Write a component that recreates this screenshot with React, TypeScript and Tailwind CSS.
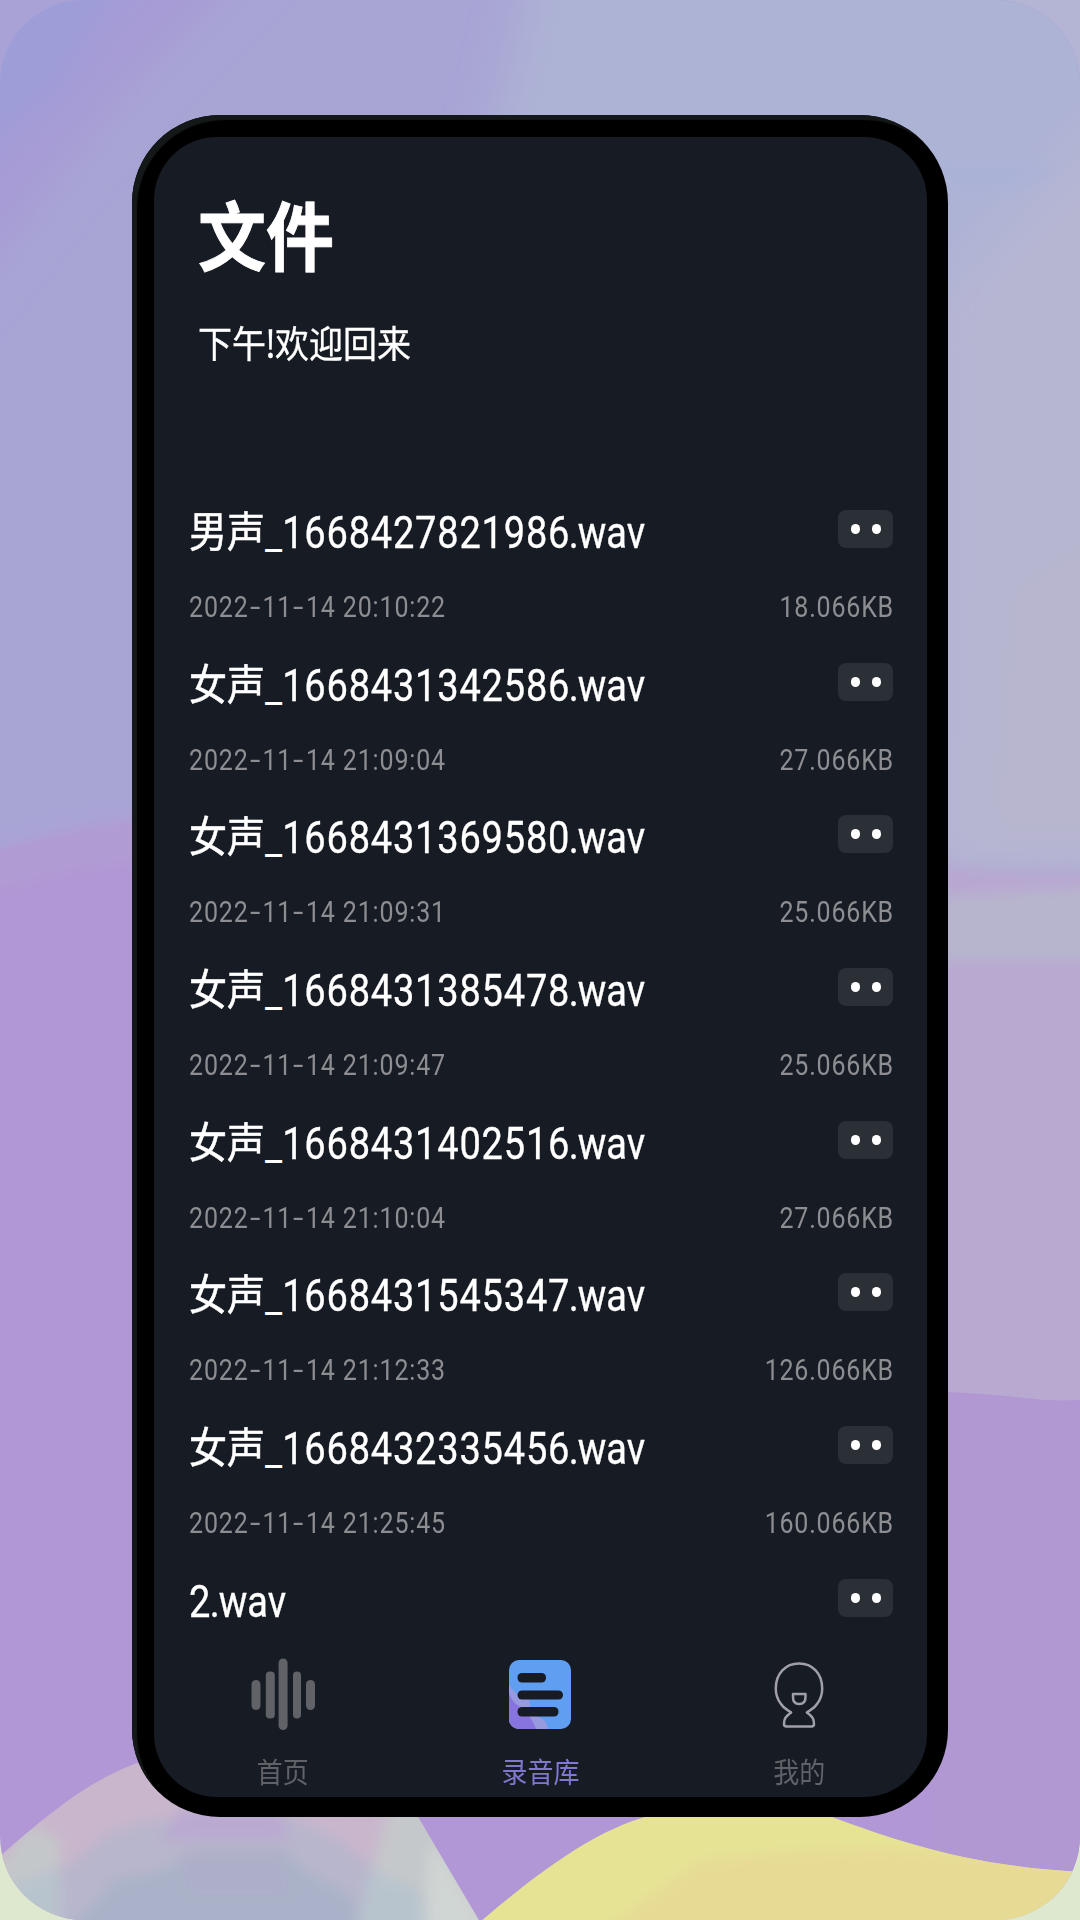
import type { ReactNode } from "react";

type FileRow = {
  voice: string | null;
  id: string;
  date: string | null;
  size: string | null;
};

const files: FileRow[] = [
  { voice: "男声", id: "1668427821986", date: "2022-11-14 20:10:22", size: "18.066KB" },
  { voice: "女声", id: "1668431342586", date: "2022-11-14 21:09:04", size: "27.066KB" },
  { voice: "女声", id: "1668431369580", date: "2022-11-14 21:09:31", size: "25.066KB" },
  { voice: "女声", id: "1668431385478", date: "2022-11-14 21:09:47", size: "25.066KB" },
  { voice: "女声", id: "1668431402516", date: "2022-11-14 21:10:04", size: "27.066KB" },
  { voice: "女声", id: "1668431545347", date: "2022-11-14 21:12:33", size: "126.066KB" },
  { voice: "女声", id: "1668432335456", date: "2022-11-14 21:25:45", size: "160.066KB" },
  { voice: null, id: "2", date: null, size: null },
];

export default function App() {
  return (
    <div className="relative w-[1080px] h-[1920px] overflow-hidden bg-[#dde8cf] flex justify-center items-start pt-[115px] font-[Roboto,'Noto_Sans_CJK_SC',sans-serif]">
      <Wallpaper />
      <div className="relative w-[816px] h-[1702px] rounded-[88px] bg-black shadow-[inset_5px_5px_1px_#151818] pt-[22px] pl-[22px] pr-[21px] pb-[20px]">
        <div className="h-full rounded-[63px] bg-[#171b23] overflow-hidden flex flex-col">
          <header className="pl-11 pt-[63px] text-white">
            <h1 className="h-20 text-[68px] leading-[80px] font-bold scale-y-[1.1] [-webkit-text-stroke:0.8px_white]">文件</h1>
            <p className="mt-[43px] h-10 text-[34px] leading-10 scale-y-[1.1] font-['Noto_Sans_CJK_SC',sans-serif] [-webkit-text-stroke:0.3px_white]">
              下午<span className="-ml-px -mr-px">!</span>欢迎回来
            </p>
          </header>

          <ul className="mt-[143px] pl-[35px] pr-[34px] h-[1143px] overflow-hidden">
            {files.map((f) => (
              <FileItem key={f.id} file={f} />
            ))}
          </ul>

          <nav className="flex-1 grid grid-cols-3">
            <Tab label="首页" className="text-[#606267]">
              <WaveIcon />
            </Tab>
            <Tab label="录音库" className="text-[#8078cf]">
              <LibraryIcon />
            </Tab>
            <Tab label="我的" className="text-[#606267] pl-0.5">
              <ProfileIcon />
            </Tab>
          </nav>
        </div>
      </div>
    </div>
  );
}

function FileItem({ file }: { file: FileRow }) {
  return (
    <li className="h-[152.7px]">
      <div className="flex justify-between items-start h-[54px]">
        <div className="flex text-[38px] leading-[54px] text-white whitespace-nowrap">
          {file.voice && (
            <>
              <span className="scale-y-[1.11] [-webkit-text-stroke:0.5px_white]">{file.voice}</span>
              <span className="translate-y-[3px]">_</span>
            </>
          )}
          <span className="scale-y-[1.18] tracking-[0.8px] [-webkit-text-stroke:0.3px_white]">{file.id}</span>
          <span className="scale-y-[1.18] -ml-[1.5px] [-webkit-text-stroke:0.3px_white]">
            .<span className="-ml-px">wav</span>
          </span>
        </div>
        <button className="mt-1 w-[55px] h-[38px] rounded-lg bg-[#2b2f36] flex items-center justify-center gap-3">
          <span className="w-[9px] h-[10px] rounded-full bg-white" />
          <span className="w-[9px] h-[10px] rounded-full bg-white" />
        </button>
      </div>
      {file.date && (
        <div className="mt-[31px] flex justify-between text-[25px] leading-8 text-[#8d8e92] whitespace-nowrap">
          <span className="scale-y-[1.2] tracking-[0.85px]">
            {file.date.split("-").map((part, i) => (
              <span key={i}>
                {i > 0 && <span className="inline-block mx-[3px] scale-x-[1.5]">-</span>}
                {part}
              </span>
            ))}
          </span>
          <span className="scale-y-[1.2] tracking-[0.8px] -mr-px">{file.size}</span>
        </div>
      )}
    </li>
  );
}

function Tab({ label, className, children }: { label: string; className: string; children: ReactNode }) {
  return (
    <div className={`flex flex-col items-center pt-[6.5px] ${className}`}>
      {children}
      <span className="mt-[23px] text-[26px] leading-9 scale-y-[1.1]">{label}</span>
    </div>
  );
}

function WaveIcon() {
  return (
    <svg width="66" height="76" viewBox="0 0 66 76" fill="currentColor">
      <rect x="1.5" y="24" width="9" height="30" rx="4.5" />
      <rect x="15.8" y="15.5" width="9" height="47" rx="4" />
      <rect x="28.6" y="2.5" width="9" height="71.5" rx="4.5" />
      <rect x="43" y="15.5" width="8" height="47" rx="4" />
      <rect x="56" y="24" width="9" height="30" rx="4.5" />
    </svg>
  );
}

function LibraryIcon() {
  return (
    <svg width="66" height="76" viewBox="0 0 66 76">
      <defs>
        <clipPath id="card">
          <rect x="2" y="4" width="62" height="69" rx="10" />
        </clipPath>
      </defs>
      <g clipPath="url(#card)">
        <rect width="66" height="76" fill="#609ef1" />
        <path d="M0 24C4 33 8 37 13 40L22 43C23 50 24 55 28 59C32 62 37 62 39 67L42 76H0Z" fill="#979adf" />
        <path d="M0 34C4 42 7 47 11 49.500C16 52 19 53 21 58C24 63 28 68 30 76H0Z" fill="#8874df" />
      </g>
      <g fill="#171b23">
        <rect x="10.5" y="17" width="28.5" height="9.5" rx="4.5" />
        <rect x="10.5" y="34.5" width="45.5" height="9" rx="4.5" />
        <rect x="10.5" y="51" width="41" height="9.5" rx="4.5" />
      </g>
    </svg>
  );
}

function ProfileIcon() {
  return (
    <svg width="66" height="76" viewBox="0 0 66 76" fill="none" stroke="#a09fa7" strokeWidth="2.5" strokeLinejoin="round" strokeLinecap="round">
      <path d="M25 56.500C19 61 18 63 18 68Q18 70.500 20.500 70.500H45.500Q48 70.500 48 68C48 63 47 61 41 56.500" />
      <path d="M25 56.500C22 54 18 53 15 48C11 43 9.800 39 9.800 32.500C9.800 17.500 19.500 7.500 33 7.500C46.500 7.500 56.200 17.500 56.200 32.500C56.200 39 55 43 51 48C48 53 44 54 41 56.500" />
      <path d="M27 38H39.500V41C39.500 46 37 48 33.200 48C29.500 48 27 46 27 41Z" />
    </svg>
  );
}

function Wallpaper() {
  return (
    <div className="absolute inset-0 bg-[linear-gradient(to_bottom,transparent_50%,#dde8cf_50%),linear-gradient(to_right,#a8a2d6_50%,#b4b4d4_50%)]">
      <div className="h-full rounded-[84px] overflow-hidden bg-[#b197d5]">
        <svg width="1080" height="1920" viewBox="0 0 1080 1920">
          <defs>
            <filter id="soft" x="-30%" y="-30%" width="160%" height="160%">
              <feGaussianBlur stdDeviation="22" />
            </filter>
            <filter id="edge" x="-20%" y="-20%" width="140%" height="140%">
              <feGaussianBlur stdDeviation="7" />
            </filter>
            <clipPath id="hill">
              <path d="M-2 1858C50 1812 90 1780 137 1763C240 1715 370 1740 418 1817L480 1922H-2Z" />
            </clipPath>
            <clipPath id="dune">
              <path d="M480 1922C550 1862 600 1830 645 1817C710 1800 780 1803 832 1817C900 1842 970 1866 1080 1872V1922Z" />
            </clipPath>
          </defs>

          <path d="M0 0H1080V880C900 900 700 860 500 840C300 800 120 820 0 850Z" fill="#a8a5d5" />
          <g filter="url(#soft)">
            <path d="M-60 -60H280L120 100L-60 330Z" fill="#a79bd5" />
            <path d="M-60 -60H150L60 90L-60 190Z" fill="#9d9dd8" />
            <path d="M540 -60H1140V300H420L500 110Z" fill="#adb3d5" />
            <path d="M1140 80L1000 230L920 320V880H1140Z" fill="#b6b6d3" />
            <path d="M1000 580L1140 500V840H980Z" fill="#b8b6ce" />
          </g>
          <path d="M930 880H1080V1400C1040 1402 990 1396 930 1392Z" fill="#b8a9d0" />
          <g filter="url(#edge)">
            <path d="M900 900L1100 886V960H900Z" fill="#b7b5ce" />
            <path d="M-20 855C50 830 100 818 160 814V862C90 862 50 878 -20 892Z" fill="#b09cd3" />
            <path d="M920 862C980 872 1020 872 1100 874V888C1020 888 980 894 920 896Z" fill="#b8a7d1" />
            <path d="M930 160L1060 168L1020 190H940Z" fill="#abb2d7" />
          </g>
          <path d="M930 1392C1000 1392 1040 1402 1080 1402V1900H930Z" fill="#b198d3" />

          <g clipPath="url(#hill)">
            <rect y="1700" width="500" height="220" fill="#c9b6cc" />
            <g filter="url(#edge)">
              <path d="M-20 1890L30 1825L60 1840L60 1900H-20Z" fill="#c4c7ca" />
              <path d="M392 1800H430L500 1940H350L372 1870Z" fill="#c5c8cb" />
              <path d="M430 1840L500 1940H425Z" fill="#d0d6d4" />
              <path d="M-20 1895L70 1865L105 1835L150 1820L290 1815L340 1840L375 1870V1940H-20Z" fill="#b8b6cc" />
              <path d="M180 1810H280L290 1840H160Z" fill="#b9a9d1" />
              <path d="M-20 1890L60 1872V1940H-20Z" fill="#b8c4cd" />
              <path d="M370 1870L420 1890L430 1940H355Z" fill="#b8c4cd" />
              <path d="M60 1940L115 1880L160 1872L200 1850H285L310 1875L350 1895L365 1940Z" fill="#a9b2c8" />
              <path d="M180 1852H280L290 1895H190Z" fill="#adaec8" />
            </g>
          </g>
          <g clipPath="url(#dune)">
            <rect x="470" y="1790" width="620" height="140" fill="#e6e494" />
            <path d="M590 1940L700 1860C800 1850 900 1835 1100 1870V1940Z" fill="#e7da95" filter="url(#edge)" />
          </g>
        </svg>
      </div>
    </div>
  );
}
